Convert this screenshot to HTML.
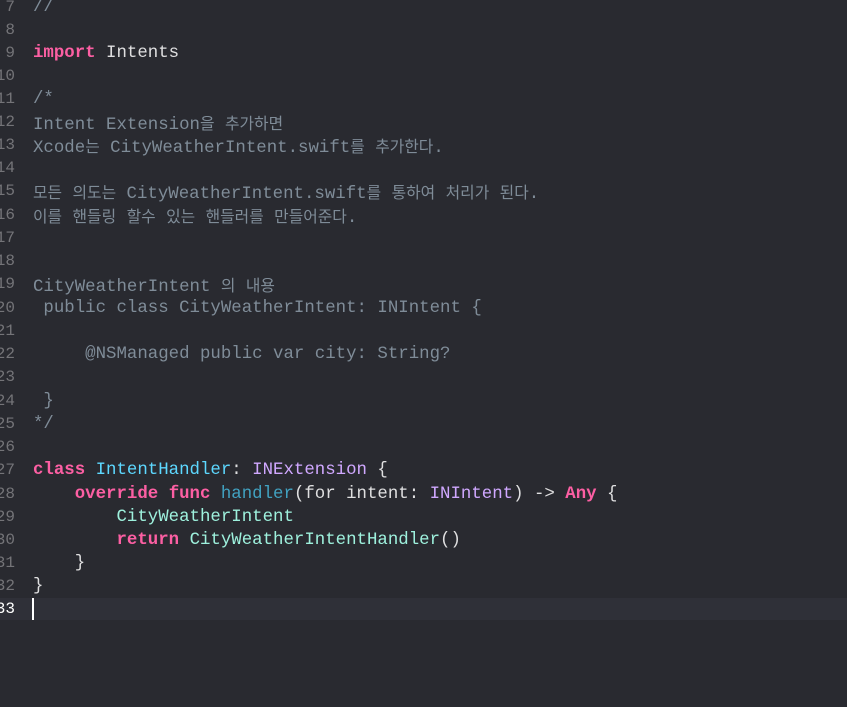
<!DOCTYPE html>
<html><head><meta charset="utf-8"><style>
html,body{margin:0;padding:0;background:#292a30;width:847px;height:707px;overflow:hidden}
.cl{position:absolute;left:0;width:847px;top:598px;height:22px;background:#2f3038}
.r{position:absolute;left:0;height:23px;line-height:23px;white-space:pre;font-family:"Liberation Mono","Noto Sans CJK KR",monospace;font-size:17.4px;color:#dfdfe0}
.n{position:absolute;left:-20px;width:35px;text-align:right;color:#747478;font-size:16px}
.t{position:absolute;left:33px}
.c{color:#7f8c98}
.k{color:#fc5fa3;font-weight:bold}
.b{color:#5dd8ff}
.p{color:#d0a8ff}
.f{color:#41a1c0}
.g{color:#9ef1dd}
.h{font-family:"Noto Sans CJK KR",sans-serif;font-size:15.8px}
.cur{position:absolute;left:32px;top:598px;width:2px;height:22px;background:#fff}
</style></head><body>
<div class="cl"></div>
<div class="r" style="top:-4px"><span class="n">7</span><span class="t c">//</span></div>
<div class="r" style="top:19px"><span class="n">8</span></div>
<div class="r" style="top:42px"><span class="n">9</span><span class="t"><span class="k">import</span> Intents</span></div>
<div class="r" style="top:65px"><span class="n">10</span></div>
<div class="r" style="top:88px"><span class="n">11</span><span class="t c">/*</span></div>
<div class="r" style="top:111px"><span class="n">12</span><span class="t c">Intent Extension<span class="h">을</span> <span class="h">추가하면</span></span></div>
<div class="r" style="top:134px"><span class="n">13</span><span class="t c">Xcode<span class="h">는</span> CityWeatherIntent.swift<span class="h">를</span> <span class="h">추가한다</span>.</span></div>
<div class="r" style="top:157px"><span class="n">14</span></div>
<div class="r" style="top:180px"><span class="n">15</span><span class="t c"><span class="h">모든</span> <span class="h">의도는</span> CityWeatherIntent.swift<span class="h">를</span> <span class="h">통하여</span> <span class="h">처리가</span> <span class="h">된다</span>.</span></div>
<div class="r" style="top:204px"><span class="n">16</span><span class="t c"><span class="h">이를</span> <span class="h">핸들링</span> <span class="h">할수</span> <span class="h">있는</span> <span class="h">핸들러를</span> <span class="h">만들어준다</span>.</span></div>
<div class="r" style="top:227px"><span class="n">17</span></div>
<div class="r" style="top:250px"><span class="n">18</span></div>
<div class="r" style="top:273px"><span class="n">19</span><span class="t c">CityWeatherIntent <span class="h">의</span> <span class="h">내용</span></span></div>
<div class="r" style="top:297px"><span class="n">20</span><span class="t c"> public class CityWeatherIntent: INIntent {</span></div>
<div class="r" style="top:320px"><span class="n">21</span></div>
<div class="r" style="top:343px"><span class="n">22</span><span class="t c">     @NSManaged public var city: String?</span></div>
<div class="r" style="top:366px"><span class="n">23</span></div>
<div class="r" style="top:390px"><span class="n">24</span><span class="t c"> }</span></div>
<div class="r" style="top:413px"><span class="n">25</span><span class="t c">*/</span></div>
<div class="r" style="top:436px"><span class="n">26</span></div>
<div class="r" style="top:459px"><span class="n">27</span><span class="t"><span class="k">class</span> <span class="b">IntentHandler</span>: <span class="p">INExtension</span> {</span></div>
<div class="r" style="top:483px"><span class="n">28</span><span class="t">    <span class="k">override</span> <span class="k">func</span> <span class="f">handler</span>(for intent: <span class="p">INIntent</span>) -&gt; <span class="k">Any</span> {</span></div>
<div class="r" style="top:506px"><span class="n">29</span><span class="t">        <span class="g">CityWeatherIntent</span></span></div>
<div class="r" style="top:529px"><span class="n">30</span><span class="t">        <span class="k">return</span> <span class="g">CityWeatherIntentHandler</span>()</span></div>
<div class="r" style="top:552px"><span class="n">31</span><span class="t">    }</span></div>
<div class="r" style="top:575px"><span class="n">32</span><span class="t">}</span></div>
<div class="r" style="top:598px"><span class="n" style="color:#fff">33</span></div>
<div class="cur"></div>
</body></html>
